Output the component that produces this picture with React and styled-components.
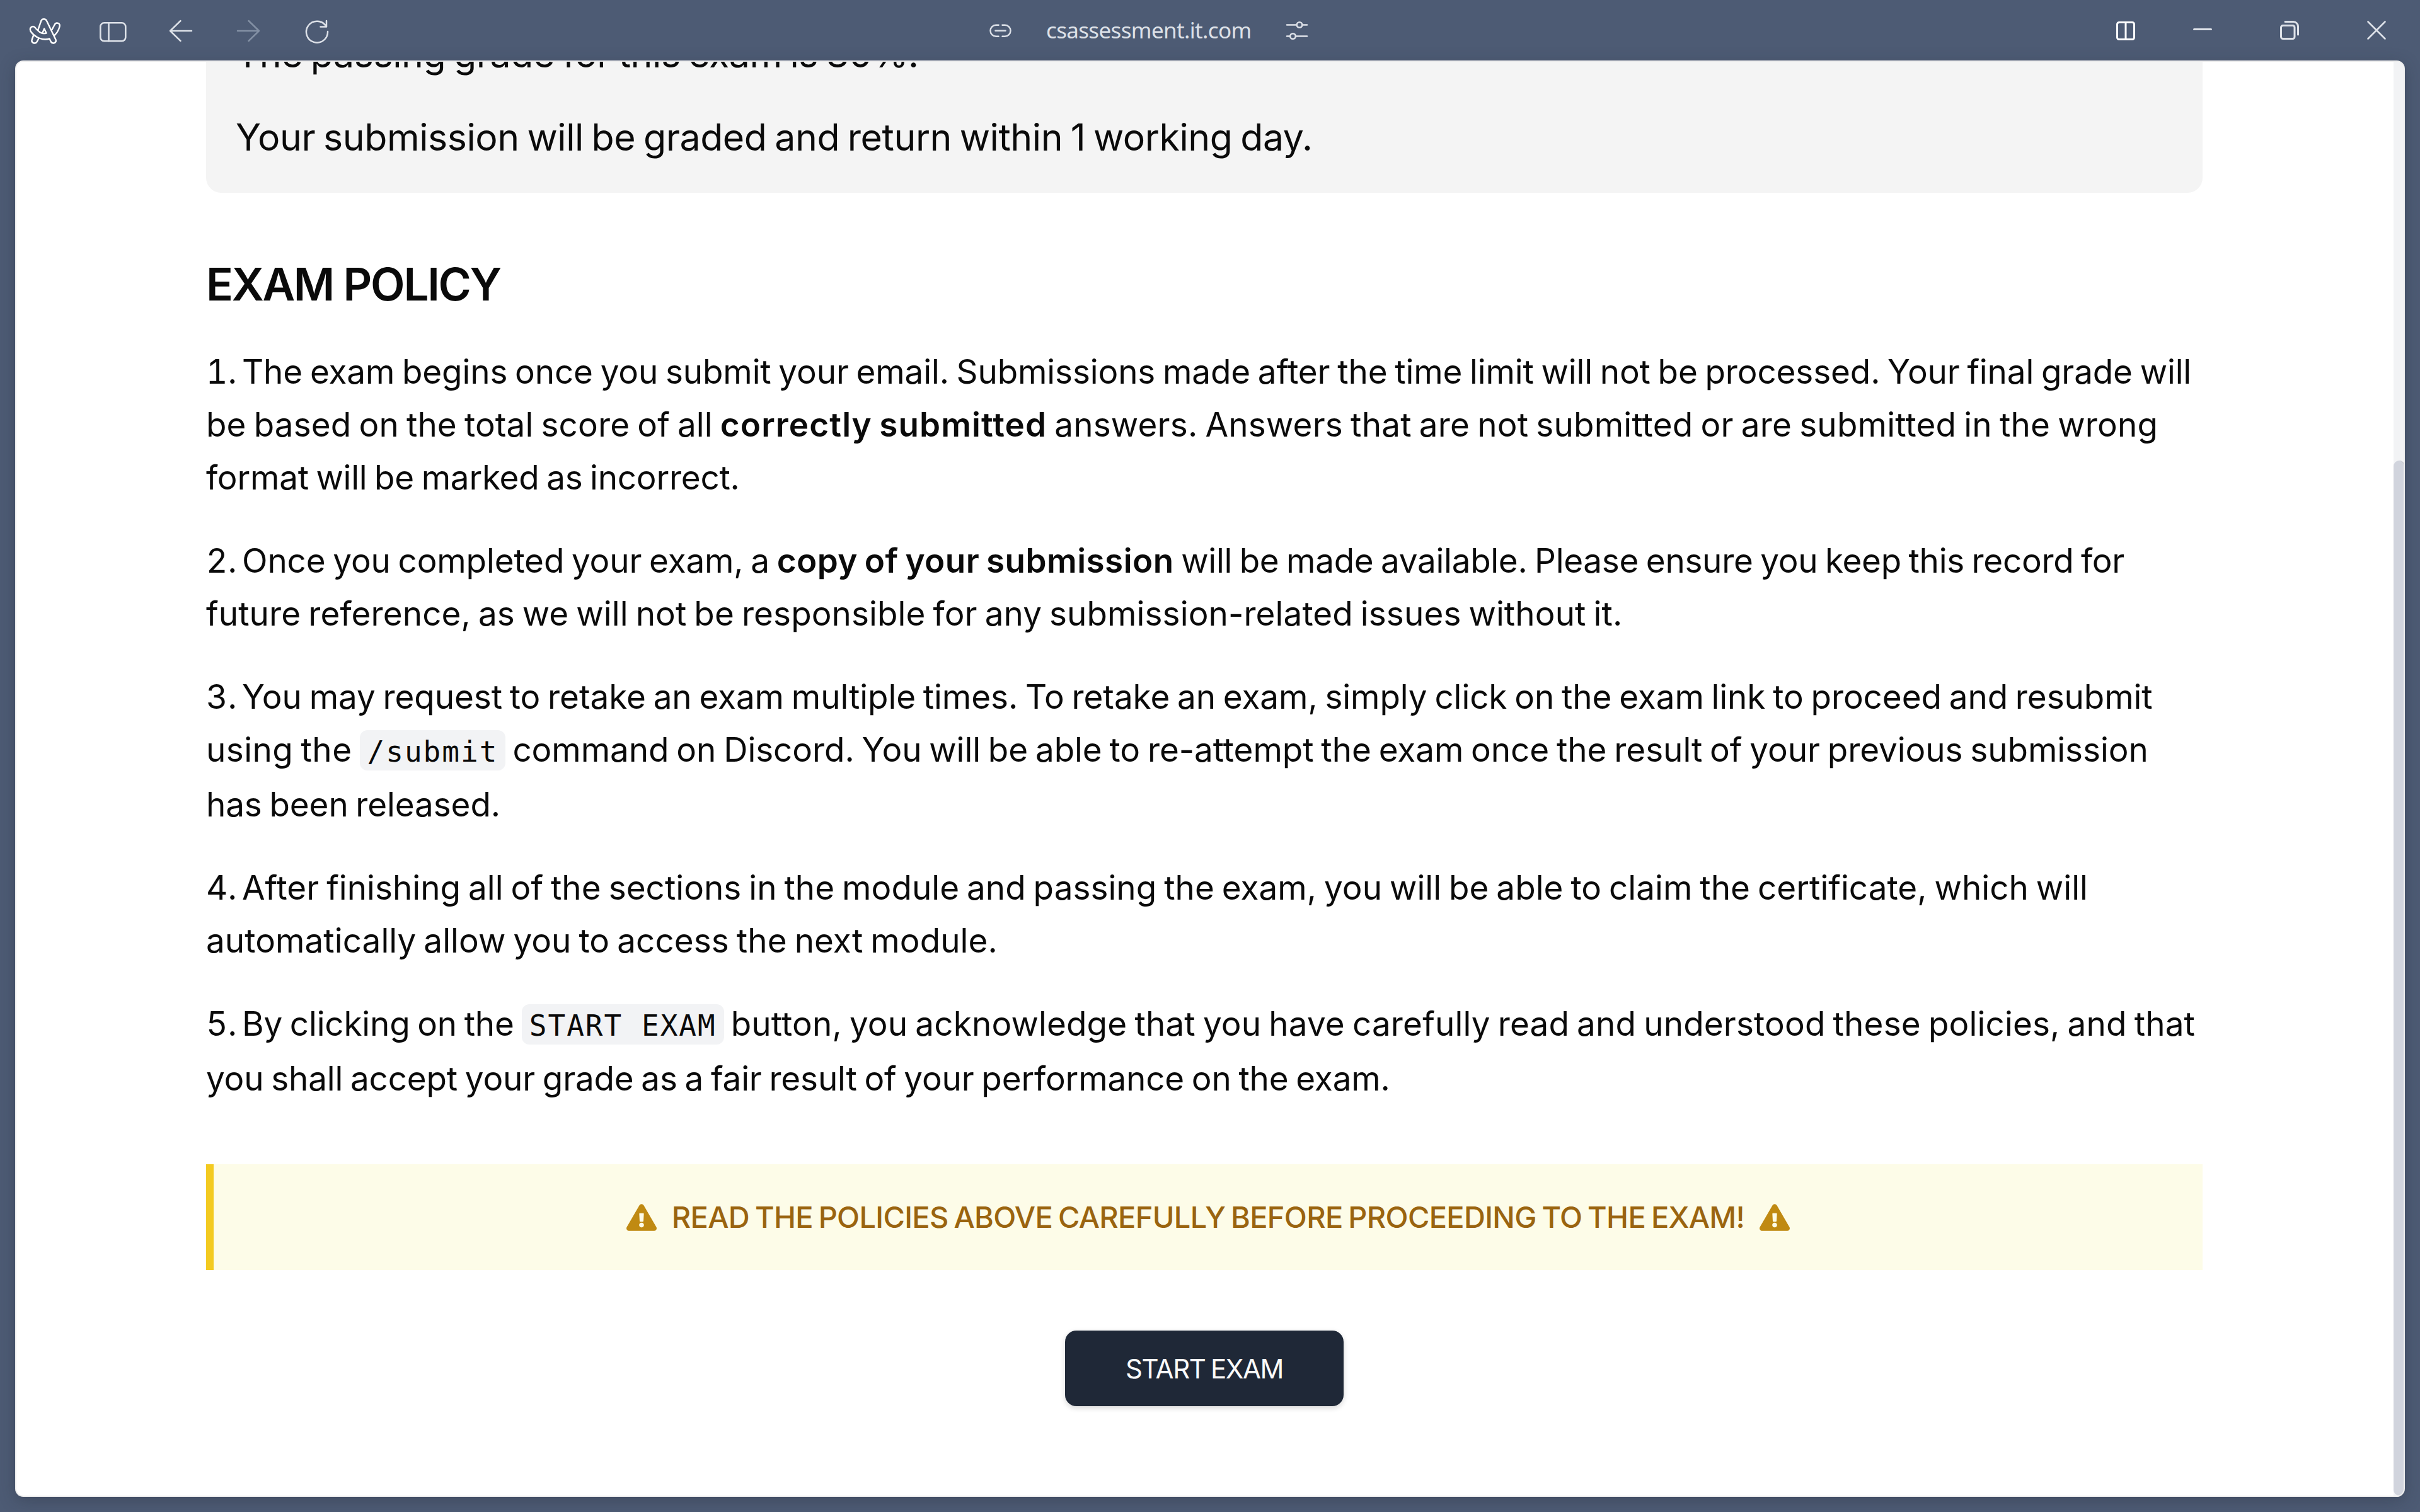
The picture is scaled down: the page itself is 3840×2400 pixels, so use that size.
import React from "react";
import styled, { createGlobalStyle } from "styled-components";
import { FaExclamationTriangle } from "react-icons/fa";

const GlobalStyle = createGlobalStyle`
  * {
    box-sizing: border-box;
  }
  body {
    margin: 0;
    background-color: #4c5a73;
  }
`;

const Browser = styled.div`
  display: flex;
  flex-direction: column;
  width: 3840px;
  height: 2400px;
  overflow: hidden;
  background-color: #4d5b74;
  font-family: Inter, "Noto Sans", sans-serif;
`;

const TitleBar = styled.header`
  display: grid;
  grid-template-columns: 1523px auto 1fr;
  align-items: center;
  flex: none;
  height: 96px;
  padding: 0 54px 0 45px;
`;

const BarGroup = styled.div`
  display: flex;
  align-items: center;
  justify-content: ${(p) => (p.$end ? "flex-end" : "flex-start")};
  gap: ${(p) => p.$gap}px;
`;

const Icon = styled.svg`
  display: block;
  flex: none;
  overflow: visible;
  fill: none;
  stroke: ${(p) => p.$color || "#dde1e8"};
  stroke-width: ${(p) => p.$stroke || 2.5};
  stroke-linecap: round;
  stroke-linejoin: round;
`;

const Address = styled.div`
  font-family: "Noto Sans", sans-serif;
  font-size: 35px;
  line-height: 48px;
  letter-spacing: ${(p) => p.$ls}px;
  color: #dde1e8;
`;

const Body = styled.div`
  flex: 1;
  display: flex;
  min-height: 0;
  padding: 0 24px 24px;
`;

const Page = styled.div`
  flex: 1;
  display: flex;
  overflow: hidden;
  border: 2px solid #ededed;
  border-radius: 13px;
  background-color: #fff;
  box-shadow: 0 6px 24px rgba(40, 45, 60, 0.35);
`;

const Content = styled.main`
  flex: 1;
  display: flex;
  flex-direction: column;
  align-items: stretch;
  padding: 0 303px 0 301px;
  margin-top: -2px;
  color: #0a0a0a;
`;

const ScrollTrack = styled.div`
  display: flex;
  align-items: flex-end;
  width: 18px;
  margin-right: -2px;
  background-color: #f2f3f5;
`;

const ScrollThumb = styled.div`
  width: 18px;
  height: 1643px;
  border-radius: 9px;
  border-right: 2px solid #c6c8cd;
  background-color: #d1d4dd;
`;

const InfoBox = styled.section`
  display: flex;
  flex-direction: column;
  justify-content: flex-end;
  gap: 48px;
  height: 210px;
  padding: 0 47px 46px;
  border-radius: 0 0 24px 24px;
  background-color: #f4f4f4;
`;

const InfoLine = styled.p`
  flex: none;
  margin: 0;
  font-size: 59px;
  line-height: 84px;
  white-space: pre;
  word-spacing: -3.5px;
  letter-spacing: ${(p) => p.$ls}px;
`;

const Heading = styled.h2`
  margin: 105px 0 57px;
  font-size: 71px;
  font-weight: 600;
  line-height: 80px;
  letter-spacing: ${(p) => p.$ls}px;
`;

const Policies = styled.div`
  display: flex;
  flex-direction: column;
  gap: 48px;
`;

const Line = styled.div`
  display: flex;
  align-items: baseline;
  height: ${(p) => (p.$tall ? 87 : 84)}px;
  font-size: 53px;
  line-height: 84px;
  white-space: pre;
  word-spacing: -3px;
`;

const Num = styled.span`
  width: 57px;
  font-feature-settings: "tnum";
`;

const Run = styled.span`
  letter-spacing: ${(p) => p.$ls}px;
`;

const Strong = styled.strong`
  font-weight: 600;
  letter-spacing: ${(p) => p.$ls}px;
`;

const Code = styled.code`
  height: 64px;
  padding: 0 12px;
  margin: 0 11px 0 12px;
  border-radius: 12px;
  background-color: #f2f3f5;
  font-family: "DejaVu Sans Mono", monospace;
  font-size: 46px;
  line-height: 68px;
  letter-spacing: 2px;
  word-spacing: 0;
`;

const Warning = styled.div`
  display: flex;
  align-items: center;
  justify-content: center;
  gap: 24px;
  height: 168px;
  margin-top: 94px;
  border-left: 12px solid #f3ca20;
  background-color: #fdfce8;
  color: #9a640f;
  font-size: 47px;
  font-weight: 500;
  line-height: 72px;
  word-spacing: -3px;
  letter-spacing: ${(p) => p.$ls}px;
  white-space: nowrap;

  svg {
    flex: none;
    width: 48px;
    height: 43px;
    color: #c08a12;
  }
`;

const StartButton = styled.button`
  align-self: center;
  width: 442px;
  height: 120px;
  margin-top: 96px;
  padding: 0;
  border: 0;
  border-radius: 18px;
  background-color: #1f2837;
  box-shadow: 0 3px 9px rgba(0, 0, 0, 0.16);
  color: #fafafa;
  font-family: inherit;
  font-size: 42px;
  font-weight: 400;
  word-spacing: -2px;
  letter-spacing: ${(p) => p.$ls}px;
`;

// each policy is a list of lines, each line a list of [kind, text, tracking]
const policies = [
  [
    [["run", "The exam begins once you submit your email. Submissions made after the time limit will not be processed. Your final grade will", -0.12]],
    [
      ["run", "be based on the total score of all ", 0.14],
      ["strong", "correctly submitted", 1.1],
      ["run", " answers. Answers that are not submitted or are submitted in the wrong", 0.2],
    ],
    [["run", "format will be marked as incorrect.", -0.23]],
  ],
  [
    [
      ["run", "Once you completed your exam, a ", -0.13],
      ["strong", "copy of your submission", 0.46],
      ["run", " will be made available. Please ensure you keep this record for", -0.28],
    ],
    [["run", "future reference, as we will not be responsible for any submission-related issues without it.", 0.1]],
  ],
  [
    [["run", "You may request to retake an exam multiple times. To retake an exam, simply click on the exam link to proceed and resubmit", -0.07]],
    [
      ["run", "using the", 0.45],
      ["code", "/submit"],
      ["run", "command on Discord. You will be able to re-attempt the exam once the result of your previous submission", -0.05],
    ],
    [["run", "has been released.", -0.12]],
  ],
  [
    [["run", "After finishing all of the sections in the module and passing the exam, you will be able to claim the certificate, which will", 0.04]],
    [["run", "automatically allow you to access the next module.", 0.08]],
  ],
  [
    [
      ["run", "By clicking on the", -0.17],
      ["code", "START EXAM"],
      ["run", "button, you acknowledge that you have carefully read and understood these policies, and that", 0.16],
    ],
    [["run", "you shall accept your grade as a fair result of your performance on the exam.", -0.15]],
  ],
];

const parts = { run: Run, strong: Strong, code: Code };

const PolicyLine = ({ number, line }) => (
  <Line $tall={line.some(([kind]) => kind === "code")}>
    {number && <Num>{number}.</Num>}
    {line.map(([kind, text, ls], i) => {
      const Part = parts[kind];
      return (
        <Part key={i} $ls={ls}>
          {text}
        </Part>
      );
    })}
  </Line>
);

const ArcLogo = () => (
  <Icon width="52" height="44" viewBox="0 0 52 44" $color="#fff" $stroke={2.4}>
    <path d="M15 22.300L20.300 7C22 3.300 27.500 3.300 29 7L43.500 37C45 42 38.500 44.500 36 40.500L33.500 35.500C24 38.500 11 34.500 3.500 23.500C1 17.500 7.500 13.500 11 18C12.500 20.500 13.500 21.500 15 22.300C18.500 26.500 24 28 28.500 26.500L25.200 19.500L22.500 26" />
    <path d="M8 30.500L5.800 36.500C4 42 10.500 44.500 13.500 40.500L16.500 35" />
    <path d="M37.500 21L41.500 13.500C44 8.500 51.500 10.500 49.500 16.500C48 22 45.500 26.500 41 30.500" />
  </Icon>
);

const SidebarIcon = () => (
  <Icon width="51" height="44" viewBox="0 0 51 44" $stroke={2.6}>
    <rect x="2.300" y="10.300" width="40" height="29" rx="6" />
    <path d="M15.500 10.300v29" />
  </Icon>
);

const BackIcon = () => (
  <Icon width="47" height="36" viewBox="0 -1 47 36">
    <path d="M36 18H2M18.500 2L2 18l16.500 16" />
  </Icon>
);

const ForwardIcon = () => (
  <Icon width="49" height="36" viewBox="0 -1 49 36" $color="#8390a4">
    <path d="M2 18h34M19.500 2L36 18 19.500 34" />
  </Icon>
);

const ReloadIcon = () => (
  <Icon width="38" height="38" viewBox="0 -2 38 38">
    <path d="M36 19A17 17 0 1 1 33 10M34 2v9.500H24.500" />
  </Icon>
);

const LinkIcon = () => (
  <Icon width="38" height="24" viewBox="-0.500 -0.750 38 24">
    <path d="M16 3H12a9 9 0 0 0 0 18h4M22 3h4a9 9 0 0 1 0 18h-4M11 12h16" />
  </Icon>
);

const SlidersIcon = () => (
  <Icon width="36" height="32" viewBox="0 -1 36 32">
    <path d="M2 6.500h15.500M26.500 6.500H34M2 24.500h5M16 24.500h18" />
    <circle cx="22" cy="6.500" r="4.300" />
    <circle cx="11.500" cy="24.500" r="4.300" />
  </Icon>
);

const SplitIcon = () => (
  <Icon width="32" height="34" viewBox="0 0 32 34" $color="#fff" $stroke={3}>
    <rect x="2.500" y="4.500" width="27" height="27" rx="3" />
    <path d="M16 4.500v27" />
  </Icon>
);

const MinimizeIcon = () => (
  <Icon width="46" height="6" viewBox="0 0 46 6" $stroke={3}>
    <path d="M1.500 1.500h27" />
  </Icon>
);

const RestoreIcon = () => (
  <Icon width="48" height="32" viewBox="0 0 48 32" $stroke={3}>
    <rect x="2.500" y="8.500" width="21.500" height="21" rx="3" />
    <path d="M9 2.500h13a7.500 7.500 0 0 1 7.500 7.500V23" />
  </Icon>
);

const CloseIcon = () => (
  <Icon width="30" height="32" viewBox="0 0 30 32" $stroke={2.6}>
    <path d="M1.500 2.500l27 27M28.500 2.500l-27 27" />
  </Icon>
);

const App = () => {
  return (
    <Browser>
      <GlobalStyle />

      <TitleBar>
        <BarGroup $gap={60}>
          <ArcLogo />
          <SidebarIcon />
          <BackIcon />
          <ForwardIcon />
          <ReloadIcon />
        </BarGroup>
        <BarGroup $gap={54}>
          <LinkIcon />
          <Address $ls={-0.65}>csassessment.it.com</Address>
          <SlidersIcon />
        </BarGroup>
        <BarGroup $gap={91} $end>
          <SplitIcon />
          <MinimizeIcon />
          <RestoreIcon />
          <CloseIcon />
        </BarGroup>
      </TitleBar>

      <Body>
        <Page>
          <Content>
            <InfoBox>
              <InfoLine $ls={-0.42}>The passing grade for this exam is 80%.</InfoLine>
              <InfoLine $ls={-0.42}>
                Your submission will be graded and return within 1 working day.
              </InfoLine>
            </InfoBox>

            <Heading $ls={-2.3}>EXAM POLICY</Heading>

            <Policies>
              {policies.map((lines, p) => (
                <div key={p}>
                  {lines.map((line, l) => (
                    <PolicyLine key={l} number={l === 0 ? p + 1 : null} line={line} />
                  ))}
                </div>
              ))}
            </Policies>

            <Warning $ls={-0.7}>
              <FaExclamationTriangle />
              <span>READ THE POLICIES ABOVE CAREFULLY BEFORE PROCEEDING TO THE EXAM!</span>
              <FaExclamationTriangle />
            </Warning>

            <StartButton $ls={-1.4}>START EXAM</StartButton>
          </Content>
          <ScrollTrack>
            <ScrollThumb />
          </ScrollTrack>
        </Page>
      </Body>
    </Browser>
  );
};

export default App;
